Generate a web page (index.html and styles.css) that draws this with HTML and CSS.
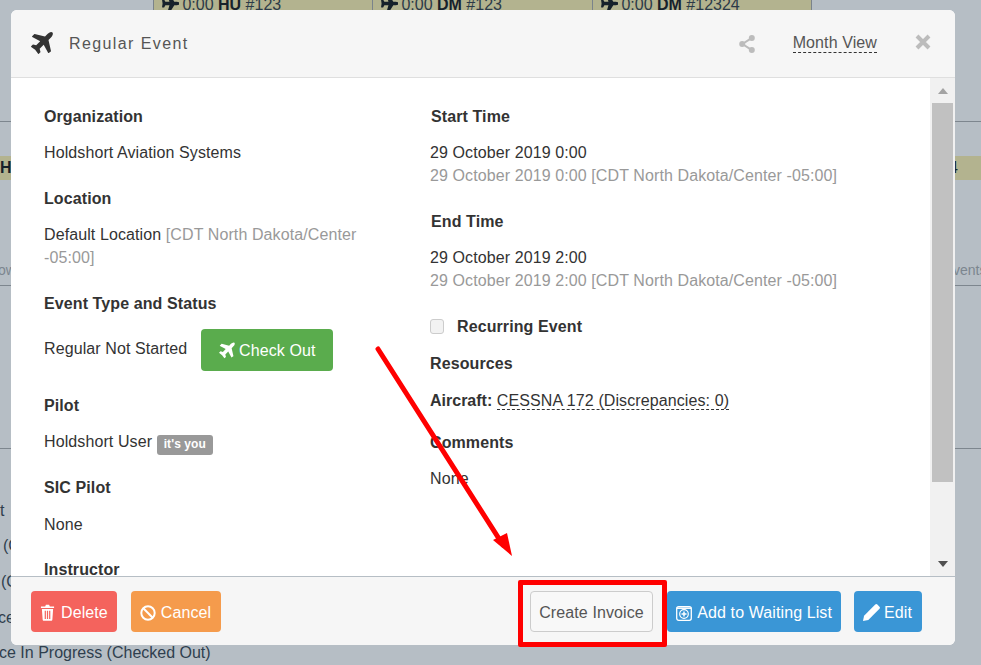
FILE: index.html
```html
<!DOCTYPE html>
<html lang="en">
<head>
<meta charset="utf-8">
<title>Regular Event</title>
<link rel="stylesheet" href="styles.css">
</head>
<body>
<svg class="defs" width="0" height="0" aria-hidden="true">
  <defs>
    <symbol id="plane-up" viewBox="0 0 1792 1792"><path d="M1568 160q44 52 12 148t-108 172l-161 161 160 696q5 19-12 33l-128 96q-7 6-19 6-4 0-7-1-15-3-21-16l-279-508-259 259 53 194q5 17-8 31l-96 96q-9 9-23 9h-2q-15-2-24-13l-189-252-252-189q-11-7-13-23-1-13 9-25l96-97q9-9 23-9 6 0 8 1l194 53 259-259-508-279q-14-8-17-24-2-16 9-27l128-128q14-13 30-8l665 159 160-160q76-76 172-108t148 12z"/></symbol>
    <symbol id="plane" viewBox="0 0 1792 1792"><path transform="rotate(45 896 896)" d="M1568 160q44 52 12 148t-108 172l-161 161 160 696q5 19-12 33l-128 96q-7 6-19 6-4 0-7-1-15-3-21-16l-279-508-259 259 53 194q5 17-8 31l-96 96q-9 9-23 9h-2q-15-2-24-13l-189-252-252-189q-11-7-13-23-1-13 9-25l96-97q9-9 23-9 6 0 8 1l194 53 259-259-508-279q-14-8-17-24-2-16 9-27l128-128q14-13 30-8l665 159 160-160q76-76 172-108t148 12z"/></symbol>
  </defs>
</svg>

<div class="backdrop">
  <div class="slot slot-a"><svg class="slot-icon"><use href="#plane"/></svg> 0:00 <b>HU</b> #123</div>
  <div class="slot slot-b"><svg class="slot-icon"><use href="#plane"/></svg> 0:00 <b>DM</b> #123</div>
  <div class="slot slot-c"><svg class="slot-icon"><use href="#plane"/></svg> 0:00 <b>DM</b> #12324</div>
  <div class="rule rule-1"></div>
  <div class="rule rule-2"></div>
  <div class="rule rule-3"></div>
  <div class="band"><b class="band-l">H</b><span class="band-r">4</span></div>
  <span class="scrap scrap-ow">ow</span>
  <span class="scrap scrap-vents">vents</span>
  <span class="list list-1">t</span>
  <span class="list list-2">(C</span>
  <span class="list list-3">(C</span>
  <span class="list list-4">ce</span>
  <span class="list list-5">ce In Progress (Checked Out)</span>
</div>

<div class="modal">
  <header class="modal-head">
    <svg class="head-plane"><use href="#plane-up"/></svg>
    <h1 class="head-title">Regular Event</h1>
    <svg class="head-share" viewBox="0 0 16 18"><path d="M12.5 3.2 3.5 9l9 5.8" fill="none" stroke="currentColor" stroke-width="2"/><circle cx="12.8" cy="3" r="3"/><circle cx="3.2" cy="9" r="3"/><circle cx="12.8" cy="15" r="3"/></svg>
    <a class="head-view">Month View</a>
    <svg class="head-close" viewBox="0 0 16 16"><path d="M2 2l12 12M14 2 2 14" fill="none" stroke="currentColor" stroke-width="4"/></svg>
  </header>

  <div class="modal-main">
    <div class="modal-body">
      <div class="col col-left">
        <section class="field">
          <h2 class="label">Organization</h2>
          <p class="value">Holdshort Aviation Systems</p>
        </section>
        <section class="field">
          <h2 class="label">Location</h2>
          <p class="value">Default Location <span class="muted">[CDT North Dakota/Center -05:00]</span></p>
        </section>
        <section class="field">
          <h2 class="label">Event Type and Status</h2>
          <div class="status-row">
            <span class="value">Regular Not Started</span>
            <button class="btn btn-green"><svg class="btn-plane"><use href="#plane-up"/></svg>Check Out</button>
          </div>
        </section>
        <section class="field">
          <h2 class="label">Pilot</h2>
          <p class="value">Holdshort User <span class="badge">it's you</span></p>
        </section>
        <section class="field field-sic">
          <h2 class="label">SIC Pilot</h2>
          <p class="value">None</p>
        </section>
        <section class="field">
          <h2 class="label">Instructor</h2>
          <p class="value">None</p>
        </section>
      </div>
      <div class="col col-right">
        <section class="field">
          <h2 class="label label-in">Start Time</h2>
          <p class="value">29 October 2019 0:00<br><span class="muted">29 October 2019 0:00 [CDT North Dakota/Center -05:00]</span></p>
        </section>
        <section class="field">
          <h2 class="label label-in">End Time</h2>
          <p class="value">29 October 2019 2:00<br><span class="muted">29 October 2019 2:00 [CDT North Dakota/Center -05:00]</span></p>
        </section>
        <label class="recurring"><span class="check"></span><span class="label">Recurring Event</span></label>
        <section class="field field-res">
          <h2 class="label">Resources</h2>
          <p class="value"><b class="strong">Aircraft:</b> <a class="dashed">CESSNA 172 (Discrepancies: 0)</a></p>
        </section>
        <section class="field">
          <h2 class="label">Comments</h2>
          <p class="value">None</p>
        </section>
      </div>
    </div>
    <div class="scrollbar">
      <span class="arrow arrow-up"></span>
      <span class="thumb"></span>
      <span class="arrow arrow-down"></span>
    </div>
  </div>

  <footer class="modal-foot">
    <div class="foot-group foot-left">
      <button class="btn btn-red"><svg class="btn-icon btn-trash" viewBox="0 0 16 18"><path d="M5.5 2.6 6.3.8h3.4l.8 1.800H15v1.600H1V2.600zM2 5.200h12l-.8 11.300c0 .8-.6 1.400-1.300 1.400H4.100c-.7 0-1.300-.6-1.300-1.400zM5 7v9h1.300V7zm2.350 0v9h1.300V7zM9.700 7v9H11V7z" fill="currentColor" fill-rule="evenodd"/></svg>Delete</button>
      <button class="btn btn-orange"><svg class="btn-icon btn-ban" viewBox="0 0 16 16"><circle cx="8" cy="8" r="6.700" fill="none" stroke="currentColor" stroke-width="2"/><path d="M3.300 3.300l9.400 9.400" stroke="currentColor" stroke-width="2"/></svg>Cancel</button>
    </div>
    <div class="foot-group foot-right">
      <button class="btn btn-plain">Create Invoice</button>
      <button class="btn btn-blue"><svg class="btn-icon btn-wait" viewBox="0 0 16 16"><rect x=".7" y="1.700" width="14.600" height="13.600" rx="2" fill="none" stroke="currentColor" stroke-width="1.300"/><path d="M.7 3.200h14.600" stroke="currentColor" stroke-width="1.500"/><circle cx="8" cy="9" r="4.300" fill="none" stroke="currentColor" stroke-width="1.200"/><path d="M8 6.500v5M5.500 9h5" stroke="currentColor" stroke-width="1.500"/></svg>Add to Waiting List</button>
      <button class="btn btn-blue btn-edit"><svg class="btn-icon btn-pencil" viewBox="0 0 16 16"><path d="M0 16l1-5L11.500.5a1.500 1.500 0 0 1 2 0l2 2a1.500 1.500 0 0 1 0 2L5 15z" fill="currentColor"/></svg>Edit</button>
    </div>
  </footer>
</div>

<div class="callout-box"></div>
<svg class="callout-arrow" viewBox="0 0 981 665" aria-hidden="true">
  <path d="M378 349 503 545" stroke="#ff0000" stroke-width="5" stroke-linecap="round" fill="none"/>
  <path d="M512 556 493 540 507 533z" fill="#ff0000"/>
</svg>
</body>
</html>
```

FILE: styles.css
```css
* { box-sizing: border-box; }

html, body {
  margin: 0;
  height: 100%;
  overflow: hidden;
}

body {
  position: relative;
  background: #b6bec5;
  font-family: "Liberation Sans", Arial, sans-serif;
  font-size: 16px;
  line-height: 23px;
  letter-spacing: 0.1px;
  color: #333;
}

.defs { position: absolute; }

.backdrop {
  position: absolute;
  inset: 0;
  color: #2b3a48;
  letter-spacing: 0;
}

.slot {
  position: absolute;
  top: -7px;
  height: 17px;
  background: #b3b38f;
  border-left: 1px solid #7a838b;
  padding-left: 5px;
  line-height: 23px;
  white-space: nowrap;
  overflow: hidden;
}
.slot b { color: #16212b; }
.slot-a { left: 153px; width: 219px; }
.slot-b { left: 372px; width: 220px; }
.slot-c { left: 592px; width: 219px; box-shadow: 1px 0 0 #7a838b; }

.slot-icon {
  width: 20px;
  height: 20px;
  margin-right: -1px;
  vertical-align: -4px;
  fill: #16212b;
}

.rule {
  position: absolute;
  left: 0;
  right: 0;
  height: 1px;
  background: #7d868e;
}
.rule-1 { top: 121px; }
.rule-2 { top: 285px; }
.rule-3 { top: 448px; }

.band {
  position: absolute;
  left: 0;
  right: 0;
  top: 156px;
  height: 24px;
  background: #b3b38f;
  color: #16212b;
  display: flex;
  justify-content: space-between;
}
.band-r { margin-right: 23px; }

.scrap {
  position: absolute;
  top: 259px;
  color: #7c868f;
  font-size: 14px;
}
.scrap-ow { left: -2px; }
.scrap-vents { left: 953px; }

.list {
  position: absolute;
  color: #2f3f4e;
  white-space: nowrap;
}
.list-1 { left: 0; top: 499px; }
.list-2 { left: 3px; top: 534px; }
.list-3 { left: 1px; top: 570px; }
.list-4 { left: -2px; top: 606px; }
.list-5 { left: -1px; top: 641px; }

.modal {
  position: absolute;
  left: 11px;
  top: 10px;
  width: 944px;
  height: 635px;
  background: #fff;
  border-radius: 6px;
  display: flex;
  flex-direction: column;
  overflow: hidden;
}

.modal-head {
  flex: none;
  height: 68px;
  background: #f6f6f6;
  border-bottom: 1px solid #dfdfdf;
  display: flex;
  align-items: center;
  padding: 0 24px 0 17px;
  color: #555;
}

.head-plane {
  width: 28px;
  height: 28px;
  fill: #333;
  flex: none;
}

.head-title {
  margin: 0 0 0 13px;
  font-size: 16px;
  font-weight: 400;
  letter-spacing: 1.4px;
  flex: 1;
}

.head-share {
  width: 16px;
  height: 18px;
  color: #bcbcbc;
  fill: currentColor;
  flex: none;
}

.head-view {
  margin-left: 38px;
  border-bottom: 1px dashed #333;
  line-height: 18px;
  height: 19px;
}

.head-close {
  margin: -3px 0 0 38px;
  width: 16px;
  height: 16px;
  color: #bcbcbc;
  flex: none;
}

.modal-main {
  flex: 1;
  min-height: 0;
  display: flex;
}

.modal-body {
  flex: 1;
  min-width: 0;
  display: grid;
  grid-template-columns: 386px 1fr;
  padding: 27px 0 0 33px;
  overflow: hidden;
}

.col-left { padding-right: 30px; }

.field { margin-bottom: 23px; }
.field-sic { margin-bottom: 22px; }
.field-sic .label { margin-bottom: 14px; }
.field-res { margin-bottom: 19px; }
.field-res .label { margin-bottom: 14px; }

.label {
  margin: 0 0 13px;
  font-size: 16px;
  font-weight: 700;
  line-height: 23px;
  color: #333;
}
.label-in { padding-left: 1px; }

.value {
  margin: 0;
  color: #333;
}

.muted { color: #999; }
.strong { color: #333; letter-spacing: 0; }

.dashed { border-bottom: 1px dashed #333; }

.status-row {
  display: flex;
  align-items: center;
  gap: 14px;
  margin-top: 14px;
}
.status-row .value { margin-top: -4px; }

.badge {
  display: inline-block;
  height: 20px;
  margin: -4px 0;
  padding: 0 7px;
  border-radius: 3px;
  background: #999;
  color: #fff;
  font-size: 12px;
  font-weight: 700;
  line-height: 18px;
  vertical-align: -1px;
}

.recurring {
  display: flex;
  align-items: center;
  margin-bottom: 14px;
}
.recurring .label { margin: 0; }

.check {
  width: 14px;
  height: 15px;
  margin-right: 13px;
  border: 1px solid #ccc;
  border-radius: 3px;
  background: #f2f2f2;
}

.scrollbar {
  flex: none;
  width: 25px;
  background: #f1f1f1;
  display: flex;
  flex-direction: column;
  align-items: center;
  padding: 0 2px;
}

.thumb {
  width: 21px;
  height: 379px;
  background: #c1c1c1;
}

.arrow {
  width: 0;
  height: 0;
  border-left: 5.500px solid transparent;
  border-right: 5.500px solid transparent;
}
.arrow-up {
  border-bottom: 6px solid #a3a3a3;
  margin: 10px 0 9px;
}
.arrow-down {
  border-top: 6px solid #505050;
  margin-top: 79px;
}

.modal-foot {
  flex: none;
  height: 69px;
  background: #f6f6f6;
  border-top: 1px solid #b6bec5;
  display: flex;
  justify-content: space-between;
  padding: 14px 33px 13px 20px;
}

.foot-group { display: flex; }
.foot-left { gap: 14px; }
.foot-right { gap: 14px; }
.foot-right .btn-edit { margin-left: -1px; }

.btn {
  height: 41px;
  padding: 2px 8px 0;
  border: 1px solid transparent;
  border-radius: 4px;
  font-family: inherit;
  font-size: 16px;
  letter-spacing: 0.1px;
  color: #fff;
  display: inline-flex;
  align-items: center;
  white-space: nowrap;
}

.btn-green {
  height: 42px;
  width: 132px;
  justify-content: center;
  background: #5aac4d;
  flex: none;
}
.btn-plane {
  width: 20px;
  height: 20px;
  fill: #fff;
  margin-right: 2px;
  margin-left: -2px;
}

.btn-red { background: #f4635d; }
.btn-orange { background: #f59b4c; padding-right: 9px; }
.btn-blue { background: #3a96d6; }
.btn-edit { padding-right: 9px; }

.btn-plain {
  background: #f8f8f8;
  border-color: #ccc;
  color: #555;
  padding: 2px 8.500px 0;
}

.btn-icon {
  width: 16px;
  height: 16px;
  margin-right: 5px;
  flex: none;
}
.btn-trash { width: 15px; height: 17px; margin-right: 6px; }
.btn-pencil { width: 17px; height: 17px; margin-right: 4px; }

.callout-box {
  position: absolute;
  left: 518px;
  top: 580px;
  width: 149px;
  height: 67px;
  border: 5px solid #ff0000;
  border-radius: 2px;
}

.callout-arrow {
  position: absolute;
  left: 0;
  top: 0;
  width: 981px;
  height: 665px;
  pointer-events: none;
}
```
